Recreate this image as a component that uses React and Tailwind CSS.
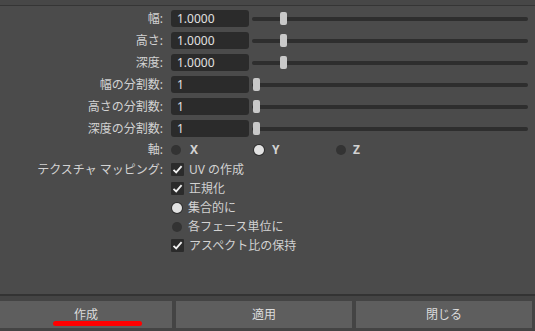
import React from "react";

const font = { fontFamily: '"Noto Sans", "Noto Sans CJK JP", sans-serif' };

const numRows = [
  { label: "幅:", value: "1.0000", thumb: 28 },
  { label: "高さ:", value: "1.0000", thumb: 28 },
  { label: "深度:", value: "1.0000", thumb: 28 },
  { label: "幅の分割数:", value: "1", thumb: 1 },
  { label: "高さの分割数:", value: "1", thumb: 1 },
  { label: "深度の分割数:", value: "1", thumb: 1 },
];

const Label = ({ children }) => (
  <div className="w-[163px] shrink-0 text-right text-[12px] text-[#d2d2d2] mr-[8px] leading-none">
    {children}
  </div>
);

const Slider = ({ thumb }) => (
  <div className="relative ml-[3px] mr-[7px] flex-1 h-[4px] rounded-full bg-[#2e2e2e]">
    <div
      className="absolute top-[-5px] h-[13px] w-[7px] rounded-[2px] bg-[#c9c9c9]"
      style={{ left: thumb }}
    ></div>
  </div>
);

const Radio = ({ on }) => (
  <div
    className={
      "h-[10px] w-[10px] rounded-full " +
      (on ? "bg-[#e2e2e2] ring-1 ring-[#2e2e2e]" : "bg-[#333333]")
    }
  ></div>
);

const Check = () => (
  <div className="flex h-[13px] w-[13px] items-center justify-center rounded-[1px] bg-[#2b2b2b]">
    <svg width="11" height="11" viewBox="0 0 11 11">
      <path
        d="M1.5 5.8 L4.2 8.4 L9.6 2.2"
        fill="none"
        stroke="#f2f2f2"
        strokeWidth="1.8"
      />
    </svg>
  </div>
);

const OptRow = ({ label, children }) => (
  <div className="flex h-[19px] items-center">
    <Label>{label}</Label>
    {children}
  </div>
);

const App = () => {
  return (
    <div
      className="flex h-[331px] w-[535px] flex-col overflow-hidden bg-[#4b4b4b]"
      style={font}
    >
      <div className="h-[5px] bg-[#474747]"></div>
      <div className="h-[1px] bg-[#353535]"></div>

      <div className="flex flex-col gap-[5px] pt-[4px]">
        {numRows.map((r) => (
          <div key={r.label} className="flex h-[17px] items-center">
            <Label>{r.label}</Label>
            <div className="flex h-[17px] w-[78px] items-center rounded-[3px] bg-[#2b2b2b] pl-[6px] text-[12px] text-[#e0e0e0]">
              {r.value}
            </div>
            <Slider thumb={r.thumb} />
          </div>
        ))}
        <div className="flex h-[16px] items-center">
          <Label>軸:</Label>
          <div className="flex w-[83px] items-center">
            <Radio />
            <span className="ml-[9px] text-[12px] font-bold text-[#d2d2d2]">X</span>
          </div>
          <div className="flex w-[82px] items-center">
            <Radio on />
            <span className="ml-[8px] text-[12px] font-bold text-[#d2d2d2]">Y</span>
          </div>
          <div className="flex items-center">
            <Radio />
            <span className="ml-[7px] text-[12px] font-bold text-[#d2d2d2]">Z</span>
          </div>
        </div>
      </div>

      <div className="mt-[2px] flex flex-col text-[12px] text-[#d2d2d2]">
        <OptRow label="テクスチャ マッピング:">
          <Check />
          <span className="ml-[5px]">UV の作成</span>
        </OptRow>
        <OptRow label="">
          <Check />
          <span className="ml-[5px]">正規化</span>
        </OptRow>
        <OptRow label="">
          <div className="ml-[1px]">
            <Radio on />
          </div>
          <span className="ml-[6px]">集合的に</span>
        </OptRow>
        <OptRow label="">
          <div className="ml-[1px]">
            <Radio />
          </div>
          <span className="ml-[6px]">各フェース単位に</span>
        </OptRow>
        <OptRow label="">
          <Check />
          <span className="ml-[5px]">アスペクト比の保持</span>
        </OptRow>
      </div>

      <div className="flex-1"></div>

      <div className="h-[2px] bg-[#333333]"></div>
      <div className="flex gap-[4px] bg-[#444444] pt-[5px] pb-[3px] text-[12px] text-[#dcdcdc]">
        <div className="relative flex h-[27px] w-[172px] items-center justify-center bg-[#5e5e5e]">
          作成
          <div className="absolute left-[53px] top-[20px] h-[5px] w-[89px] rounded-full bg-[#ff0000]"></div>
        </div>
        <div className="flex h-[27px] w-[176px] items-center justify-center bg-[#5e5e5e]">
          適用
        </div>
        <div className="flex h-[27px] w-[176px] items-center justify-center bg-[#5e5e5e]">
          閉じる
        </div>
      </div>
    </div>
  );
};

export default App;
